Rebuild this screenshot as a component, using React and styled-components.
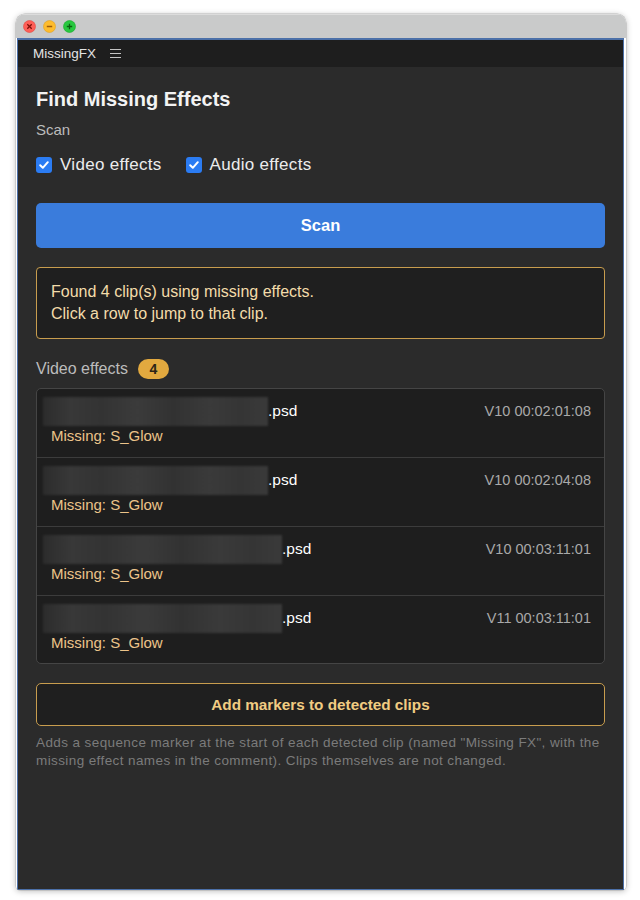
import styled, { createGlobalStyle } from 'styled-components';

const GlobalStyle = createGlobalStyle`
	html, body {
		margin: 0;
		background: #ffffff;
	}
	body {
		font-family: "Liberation Sans", Arial, sans-serif;
		-webkit-font-smoothing: antialiased;
	}
`;

const Page = styled.div`
	padding: 14px 14px 10px 16px;
`;

const Window = styled.div`
	width: 610px;
	height: 876px;
	display: flex;
	flex-direction: column;
	border-radius: 9px 9px 4px 4px;
	box-shadow: 0 1px 6px rgba(0, 0, 0, 0.28), 0 0 0 0.5px rgba(0, 0, 0, 0.2);
	overflow: hidden;
	background: #ffffff;
`;

const TitleBar = styled.div`
	height: 24px;
	flex-shrink: 0;
	display: flex;
	align-items: center;
	gap: 7px;
	padding-left: 7px;
	background: #c9caca;
	border-top: 1px solid #dcdcdc;
	box-sizing: border-box;
`;

const Light = styled.svg`
	width: 13px;
	height: 13px;
	display: block;
`;

const Panel = styled.div`
	flex: 1;
	display: flex;
	flex-direction: column;
	margin: 0 2px 0 1px;
	border: 1px solid #4c70a8;
	border-top-width: 2px;
	background: #2b2b2b;
`;

const Header = styled.div`
	height: 27px;
	display: flex;
	align-items: center;
	gap: 14px;
	padding-left: 15px;
	background: #1e1e1e;
	color: #e4e4e4;
	font-size: 13.5px;
`;

const Content = styled.div`
	padding: 20px 18px;
	display: flex;
	flex-direction: column;
`;

const Title = styled.h1`
	margin: 0;
	font-size: 20px;
	line-height: 24px;
	font-weight: 700;
	color: #f3f3f3;
`;

const Label = styled.div`
	margin-top: ${p => p.$top}px;
	font-size: ${p => p.$size || 15}px;
	line-height: 22px;
	color: #bcbcbc;
	display: flex;
	align-items: center;
	gap: 10px;
`;

const CheckRow = styled.div`
	margin-top: 12px;
	height: 24px;
	display: flex;
	align-items: center;
	gap: 24px;
`;

const CheckItem = styled.label`
	display: flex;
	align-items: center;
	gap: 8px;
	font-size: 17px;
	letter-spacing: 0.3px;
	color: #ececec;
`;

const Box = styled.span`
	width: 16px;
	height: 16px;
	border-radius: 3px;
	background: #2b7cf3;
	display: flex;
	align-items: center;
	justify-content: center;
`;

const PrimaryButton = styled.button`
	margin-top: 26px;
	height: 45px;
	border: none;
	border-radius: 5px;
	background: #3a7cdc;
	color: #ffffff;
	font-family: inherit;
	font-size: 16.5px;
	font-weight: 700;
`;

const Notice = styled.div`
	margin-top: 19px;
	padding: 13px 14px;
	border: 1px solid #c89d4e;
	border-radius: 4px;
	background: #1f1f1f;
	color: #f3dcaa;
	font-size: 16px;
	line-height: 22px;
`;

const Badge = styled.span`
	min-width: 31px;
	height: 20px;
	border-radius: 10px;
	background: #e2a93f;
	color: #2b2417;
	font-size: 14px;
	font-weight: 700;
	display: flex;
	align-items: center;
	justify-content: center;
`;

const List = styled.div`
	margin-top: 8px;
	border: 1px solid #454545;
	border-radius: 5px;
	background: #1e1e1e;
	overflow: hidden;
`;

const Row = styled.div`
	height: 69px;
	box-sizing: border-box;
	padding: 10px 13px 10px 14px;
	display: flex;
	justify-content: space-between;
	align-items: flex-start;
	border-bottom: 1px solid #3c3c3c;
	&:last-child {
		height: 67px;
		border-bottom: none;
	}
`;

const Name = styled.div`
	height: 24px;
	display: flex;
	align-items: center;
	color: #ffffff;
	font-size: 15.5px;
`;

const Redacted = styled.span`
	display: inline-block;
	height: 29px;
	margin-left: -8px;
	background: linear-gradient(90deg, #2c2c2c 0%, #383838 12%, #333333 26%, #3b3b3b 42%, #323232 58%, #3a3a3a 74%, #353535 88%, #3a3a3a 100%);
	filter: blur(0.8px);
`;

const Missing = styled.div`
	height: 24px;
	line-height: 26px;
	color: #ecc48a;
	font-size: 15px;
`;

const Timecode = styled.div`
	height: 24px;
	line-height: 24px;
	color: #a9a9a9;
	font-size: 14.5px;
`;

const OutlineButton = styled.button`
	margin-top: 19px;
	height: 43px;
	border: 1px solid #c89d4e;
	border-radius: 5px;
	background: #1f1f1f;
	color: #f1cc82;
	font-family: inherit;
	font-size: 15.3px;
	font-weight: 700;
`;

const Help = styled.p`
	margin: 8px 0 0;
	font-size: 13.5px;
	letter-spacing: 0.4px;
	line-height: 18px;
	color: #7b7b7b;
`;

const clips = [
	{ id: 1, width: 225, tc: 'V10 00:02:01:08' },
	{ id: 2, width: 225, tc: 'V10 00:02:04:08' },
	{ id: 3, width: 239, tc: 'V10 00:03:11:01' },
	{ id: 4, width: 239, tc: 'V11 00:03:11:01' },
];

const TrafficLight = ({ fill, edge, glyph, kind }) => (
	<Light viewBox="0 0 13 13">
		<circle cx="6.5" cy="6.5" r="6" fill={fill} stroke={edge} strokeWidth="0.6" />
		{kind === 'close' && <path d="M4.3 4.3 L8.7 8.7 M8.7 4.3 L4.3 8.7" stroke={glyph} strokeWidth="1.3" />}
		{kind === 'min' && <path d="M3.8 6.5 H9.2" stroke={glyph} strokeWidth="1.3" />}
		{kind === 'max' && <path d="M3.8 6.5 H9.2 M6.5 3.8 V9.2" stroke={glyph} strokeWidth="1.3" />}
	</Light>
);

const Check = ({ label }) => (
	<CheckItem>
		<Box>
			<svg width="12" height="12" viewBox="0 0 12 12">
				<path d="M2.2 6.3 L4.8 8.8 L9.8 3.2" fill="none" stroke="#ffffff" strokeWidth="2" strokeLinecap="round" strokeLinejoin="round" />
			</svg>
		</Box>
		{label}
	</CheckItem>
);

const App = () => {
	return (
		<Page>
			<GlobalStyle />
			<Window>
				<TitleBar>
					<TrafficLight kind="close" fill="#fe5f57" edge="#e1463f" glyph="#7e0f08" />
					<TrafficLight kind="min" fill="#febc2e" edge="#dea123" glyph="#9a5b0c" />
					<TrafficLight kind="max" fill="#29c840" edge="#1aab2b" glyph="#0b5f10" />
				</TitleBar>
				<Panel>
					<Header>
						MissingFX
						<svg width="11" height="11" viewBox="0 0 11 11">
							<path d="M0 1.5 H11 M0 5.5 H11 M0 9.5 H11" stroke="#c4c4c4" strokeWidth="1.2" />
						</svg>
					</Header>
					<Content>
						<Title>Find Missing Effects</Title>
						<Label $top={8}>Scan</Label>
						<CheckRow>
							<Check label="Video effects" />
							<Check label="Audio effects" />
						</CheckRow>
						<PrimaryButton>Scan</PrimaryButton>
						<Notice>
							Found 4 clip(s) using missing effects.
							<br />
							Click a row to jump to that clip.
						</Notice>
						<Label $top={19} $size={16}>
							Video effects
							<Badge>4</Badge>
						</Label>
						<List>
							{clips.map(clip => (
								<Row key={clip.id}>
									<div>
										<Name>
											<Redacted style={{ width: clip.width }} />
											.psd
										</Name>
										<Missing>Missing: S_Glow</Missing>
									</div>
									<Timecode>{clip.tc}</Timecode>
								</Row>
							))}
						</List>
						<OutlineButton>Add markers to detected clips</OutlineButton>
						<Help>
							Adds a sequence marker at the start of each detected clip (named "Missing FX", with the
							missing effect names in the comment). Clips themselves are not changed.
						</Help>
					</Content>
				</Panel>
			</Window>
		</Page>
	);
};

export default App;
